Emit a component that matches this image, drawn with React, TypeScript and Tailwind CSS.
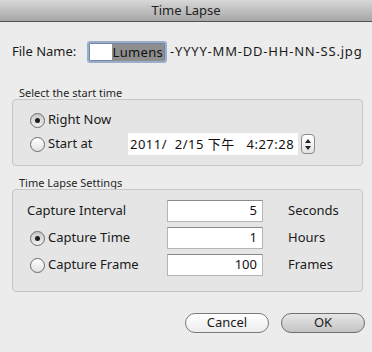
import React from "react";

function Radio({ checked }: { checked?: boolean }) {
  return (
    <div
      className={
        "w-[15px] h-[15px] rounded-full border border-[#6b6b6b] flex items-center justify-center shrink-0 " +
        (checked
          ? "bg-[linear-gradient(#c8c8c8,#f0f0f0)]"
          : "bg-[linear-gradient(#ffffff,#e2e2e2)]")
      }
    >
      {checked && <div className="w-[5px] h-[5px] rounded-full bg-[#1e1e1e]" />}
    </div>
  );
}

function NumField({ value }: { value: string }) {
  return (
    <div className="w-[96px] h-[22px] bg-white border border-[#b5b5b5] border-t-[#8a8a8a] flex items-center justify-end pr-[5px] text-[13px] text-[#111]">
      {value}
    </div>
  );
}

export default function App() {
  return (
    <div
      className="w-[372px] h-[352px] bg-[#ececec] flex flex-col text-[#1a1a1a] overflow-hidden"
      style={{ fontFamily: '"Noto Sans", "Noto Sans CJK TC", sans-serif' }}
    >
      <div className="h-[22px] shrink-0 border-b border-[#515151] bg-[linear-gradient(#d8d8d8,#a6a6a6)] flex items-center justify-center text-[13px] text-[#222]">
        Time Lapse
      </div>
      <div className="pl-[12px] pr-[9px] flex flex-col">
        <div className="mt-[19px] h-[22px] flex items-center text-[13px]">
          <span className="w-[75px]">File Name:</span>
          <div className="w-[80px] h-[22px] rounded-[3px] border-2 border-[#9aaecb] shadow-[inset_0_0_0_1px_#6f86a6] bg-white flex items-center justify-end pr-[1px]">
            <span className="bg-[#8e8e8e] h-[17px] leading-[17px] pl-[1px] pr-[1px] text-[#111] tracking-[0.3px]">Lumens</span>
          </div>
          <span className="ml-[3px] tracking-[0.8px] whitespace-nowrap">-YYYY-MM-DD-HH-NN-SS.jpg</span>
        </div>

        <div className="mt-[23px] pl-[7px] text-[11px] leading-[13px] text-[#262626]">
          Select the start time
        </div>
        <div className="h-[67px] rounded-[4px] border border-[#c6c6c6] bg-[#e5e5e5] flex flex-col pl-[17px] pt-[12px]">
          <div className="h-[16px] flex items-center gap-[3px] text-[13px]">
            <Radio checked />
            <span>Right Now</span>
          </div>
          <div className="mt-[5px] h-[22px] flex items-center text-[13px]">
            <Radio />
            <span className="ml-[3px] w-[80px]">Start at</span>
            <div className="w-[170px] h-[22px] bg-white flex items-center pl-[2px] pt-[2px] overflow-hidden whitespace-pre text-[13px] text-[#111] tracking-[0.5px]">
              2011/  2/15 下午   4:27:28
            </div>
            <div className="ml-[3px] w-[14px] h-[20px] rounded-[4px] border border-[#8a8a8a] bg-[linear-gradient(#ffffff,#e4e4e4)] flex flex-col items-center justify-center gap-[3px]">
              <svg width="6" height="4" viewBox="0 0 6 4"><path d="M3 0L6 4H0z" fill="#222" /></svg>
              <svg width="6" height="4" viewBox="0 0 6 4"><path d="M0 0H6L3 4z" fill="#222" /></svg>
            </div>
          </div>
        </div>

        <div className="mt-[10px] pl-[7px] text-[11px] leading-[13px] text-[#262626]">
          Time Lapse Settings
        </div>
        <div className="h-[103px] rounded-[4px] border border-[#c6c6c6] bg-[#e5e5e5] flex flex-col pt-[10px] text-[13px]">
          <div className="h-[22px] flex items-center">
            <div className="w-[154px] pl-[14px]">Capture Interval</div>
            <NumField value="5" />
            <span className="ml-[25px]">Seconds</span>
          </div>
          <div className="mt-[5px] h-[22px] flex items-center">
            <div className="w-[154px] pl-[17px] flex items-center gap-[3px]">
              <Radio checked />
              <span>Capture Time</span>
            </div>
            <NumField value="1" />
            <span className="ml-[25px]">Hours</span>
          </div>
          <div className="mt-[5px] h-[22px] flex items-center">
            <div className="w-[154px] pl-[17px] flex items-center gap-[3px]">
              <Radio />
              <span>Capture Frame</span>
            </div>
            <NumField value="100" />
            <span className="ml-[25px]">Frames</span>
          </div>
        </div>

        <div className="mt-[21px] flex justify-end gap-[12px] mr-[-2px] text-[13px]">
          <div className="w-[84px] h-[20px] rounded-full border border-[#7a7a7a] bg-[linear-gradient(#ffffff,#ececec)] flex items-center justify-center">
            Cancel
          </div>
          <div className="w-[84px] h-[20px] rounded-full border border-[#6e6e6e] bg-[linear-gradient(#e6e6e6,#c4c4c4)] flex items-center justify-center">
            OK
          </div>
        </div>
      </div>
    </div>
  );
}
